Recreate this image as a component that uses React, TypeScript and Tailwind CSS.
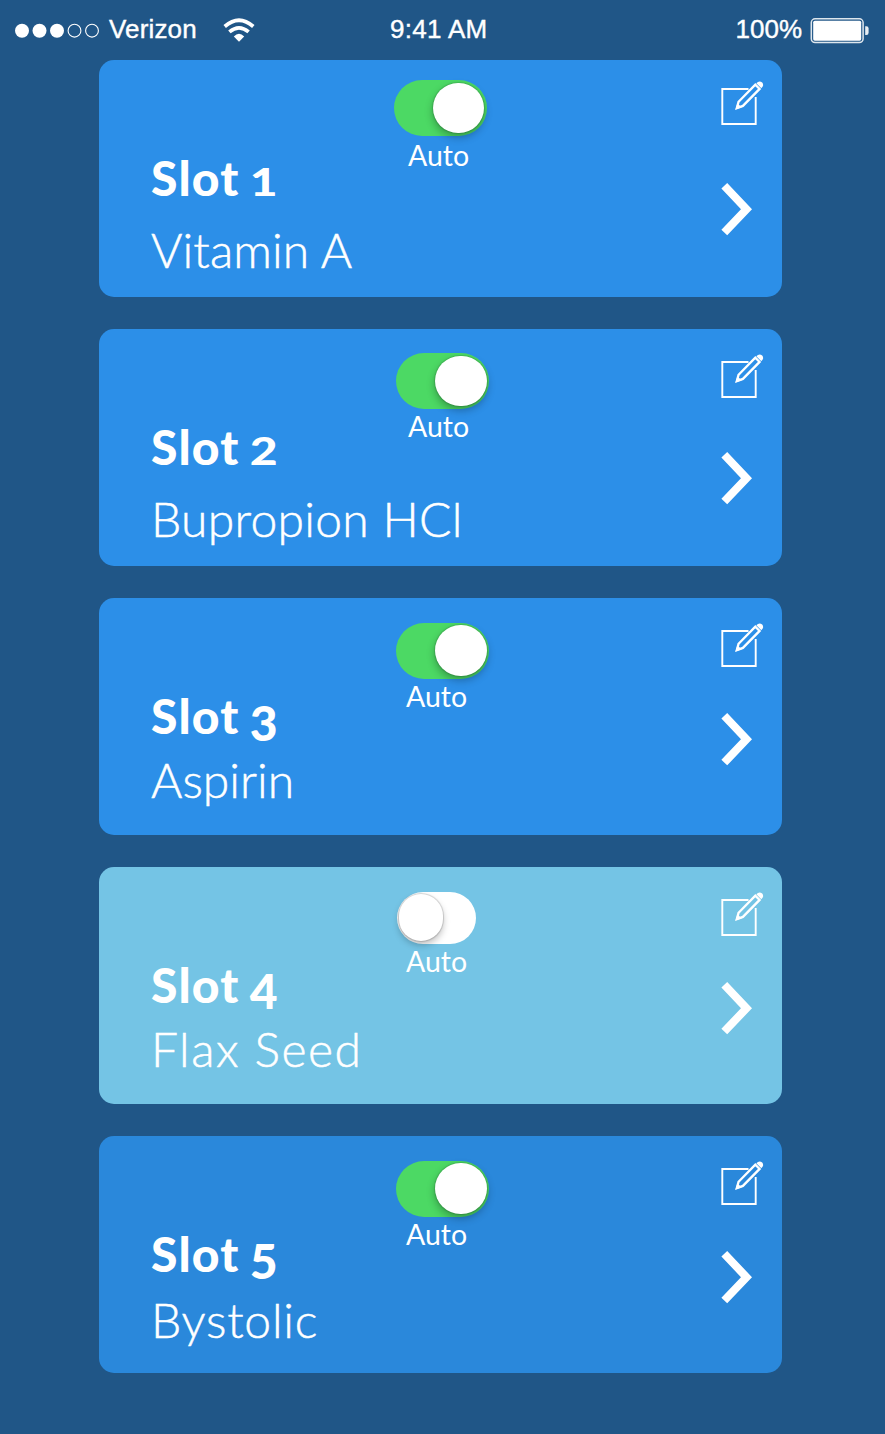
import React from "react";

type Slot = {
  title: string;
  digit: string;
  digitClass: string;
  name: string;
  nameClass: string;
  on: boolean;
  cardClass: string;
  toggleClass: string;
  autoClass: string;
  editClass: string;
  chevronClass: string;
};

const slots: Slot[] = [
  { title: "Slot", digit: "1", digitClass: "scale-y-[.8]", name: "Vitamin A", nameClass: "mt-[16px] tracking-[0.1px]", on: true, cardClass: "bg-[#2c8fe8]", toggleClass: "mt-[20px] ml-[-3px]", autoClass: "mt-[3px] ml-[11.5px]", editClass: "mt-[20.5px]", chevronClass: "mt-[57px]" },
  { title: "Slot", digit: "2", digitClass: "scale-y-[.8]", name: "Bupropion HCl", nameClass: "mt-[16px] tracking-[0.3px]", on: true, cardClass: "bg-[#2c8fe8]", toggleClass: "mt-[24px] ml-[-0.5px]", autoClass: "mt-[1px] ml-[11.5px]", editClass: "mt-[24.5px]", chevronClass: "mt-[53px]" },
  { title: "Slot", digit: "3", digitClass: "relative top-[6.5px]", name: "Aspirin", nameClass: "mt-[8px]", on: true, cardClass: "bg-[#2c8fe8]", toggleClass: "mt-[24.5px] ml-[-0.5px]", autoClass: "mt-[1.5px] ml-[9.5px]", editClass: "mt-[24.5px]", chevronClass: "mt-[45px]" },
  { title: "Slot", digit: "4", digitClass: "relative top-[5.5px]", name: "Flax Seed", nameClass: "mt-[8px] tracking-[1.5px]", on: false, cardClass: "bg-[#74c4e5]", toggleClass: "mt-[24.5px]", autoClass: "mt-[2px] ml-[9.5px]", editClass: "mt-[24.5px]", chevronClass: "mt-[45px]" },
  { title: "Slot", digit: "5", digitClass: "relative top-[6.5px]", name: "Bystolic", nameClass: "mt-[10px] tracking-[0.8px]", on: true, cardClass: "bg-[#2a88db]", toggleClass: "mt-[24.5px] ml-[-0.5px]", autoClass: "mt-[1.5px] ml-[9.5px]", editClass: "mt-[24.5px]", chevronClass: "mt-[45px]" },
];

function StatusBar() {
  return (
    <header className="flex h-[60px] items-start font-['Liberation_Sans',sans-serif] text-[26px] leading-[30px] [-webkit-text-stroke:0.4px_white]">
      <div className="flex w-[390px] pt-[14px] pl-[15px]">
        <svg className="mt-[9px] h-[15px] w-[86px]" viewBox="0 0 86 15">
          {[7, 24.5, 42].map((x) => (
            <circle key={x} cx={x} cy="7.7" r="7" fill="white" />
          ))}
          {[59.5, 77].map((x) => (
            <circle key={x} cx={x} cy="7.7" r="6.4" fill="none" stroke="white" strokeWidth="1.1" />
          ))}
        </svg>
        <span className="ml-[8px] w-[88px] tracking-[0.15px] whitespace-nowrap">Verizon</span>
        <svg className="mt-[4px] ml-[26px] h-[24px] w-[32px]" viewBox="0 0 32 24" fill="none" stroke="white" strokeWidth="3.7">
          <path d="M1.7 8.5 Q16 -4.1 30.3 8.5" />
          <path d="M6.4 13.9 Q16 5.7 25.6 13.9" />
          <path d="M10.8 18.4 Q16 13 21.2 18.4 L16 23.8 Z" fill="white" stroke="none" />
        </svg>
      </div>
      <span className="w-[345.5px] pt-[14px] tracking-[0.3px] whitespace-nowrap">9:41 AM</span>
      <span className="w-[74.5px] pt-[14px] whitespace-nowrap">100%</span>
      <svg className="mt-[17px] h-[27px] w-[60px]" viewBox="0 0 60 27">
        <rect x="1.3" y="1.8" width="51.8" height="23.8" rx="3.8" fill="none" stroke="white" strokeOpacity=".85" strokeWidth="1.5" />
        <rect x="3.2" y="3.7" width="48" height="20" rx="1.6" fill="white" />
        <path d="M55.2 9.3 h1.2 q2.2 0 2.2 2.2 v4.2 q0 2.2 -2.2 2.2 h-1.2z" fill="white" fillOpacity=".9" />
      </svg>
    </header>
  );
}

function Toggle({ on, className }: { on: boolean; className: string }) {
  return on ? (
    <div className={`flex h-[56px] w-[93px] shrink-0 items-center justify-end rounded-full bg-[#4cd964] pr-[2.5px] ${className}`}>
      <div className="h-[50.5px] w-[51.5px] rounded-full bg-white shadow-[0_0_1px_1px_rgba(0,0,0,0.12),0_4px_8px_rgba(0,0,0,0.3)]" />
    </div>
  ) : (
    <div className={`mb-[-1px] flex h-[52px] w-[79.5px] shrink-0 items-center rounded-full bg-white pl-[2px] ${className}`}>
      <div className="h-[47.5px] w-[44px] rounded-full bg-white shadow-[0_0_1px_1px_rgba(0,0,0,0.15),0_4px_7px_rgba(0,0,0,0.25)]" />
    </div>
  );
}

function EditIcon({ className }: { className: string }) {
  return (
    <svg className={`h-[45px] w-[44px] shrink-0 ${className}`} viewBox="0 0 44 45" fill="none" stroke="white">
      <path d="M27.5 8 H1.3 V43 H34.7 V16" strokeWidth="1.9" />
      <path d="M17.6 20.7 L34.3 3.6 L38.6 7.9 L21.9 24.9 L15.8 27.1 Z" strokeWidth="2.3" />
      <path d="M14.5 28.6 L16.3 22.4 L20.9 26.3 Z" fill="white" stroke="none" />
      <path d="M35.3 2.3 Q38.3 -1 41.2 1.6 Q43.5 4.5 40.3 7.2 Z" fill="white" stroke="none" />
    </svg>
  );
}

function Chevron({ className }: { className: string }) {
  return (
    <svg className={`h-[53px] w-[32px] shrink-0 ${className}`} viewBox="0 0 32 53">
      <path d="M3.3 2.8 L25.5 26.2 L3.3 49.6" fill="none" stroke="white" strokeWidth="8" />
    </svg>
  );
}

function SlotCard({ slot }: { slot: Slot }) {
  return (
    <section className={`flex h-[237px] w-[683px] shrink-0 rounded-[15px] ${slot.cardClass}`}>
      <div className="flex w-[297.5px] flex-col pt-[90px] pl-[52px]">
        <h2 className="flex text-[48px] leading-[56px] font-black tracking-[1.25px] whitespace-nowrap">
          {slot.title}
          <span className={`ml-[10px] w-[26px] origin-[50%_46.6px] ${slot.digitClass}`}>{slot.digit}</span>
        </h2>
        <p className={`text-[48px] leading-[56px] font-light whitespace-nowrap [-webkit-text-stroke:0.5px_white] ${slot.nameClass}`}>{slot.name}</p>
      </div>
      <div className="flex w-[324px] flex-col items-start">
        <Toggle on={slot.on} className={slot.toggleClass} />
        <span className={`text-[28.5px] leading-[32px] ${slot.autoClass}`}>Auto</span>
      </div>
      <div className="flex flex-col">
        <EditIcon className={slot.editClass} />
        <Chevron className={slot.chevronClass} />
      </div>
    </section>
  );
}

export default function App() {
  return (
    <main className="h-[1434px] w-[885px] overflow-hidden bg-[#205687] font-[Lato,sans-serif] text-white">
      <StatusBar />
      <div className="flex flex-col gap-[32px] pl-[99px]">
        {slots.map((slot) => (
          <SlotCard key={slot.digit} slot={slot} />
        ))}
      </div>
    </main>
  );
}
